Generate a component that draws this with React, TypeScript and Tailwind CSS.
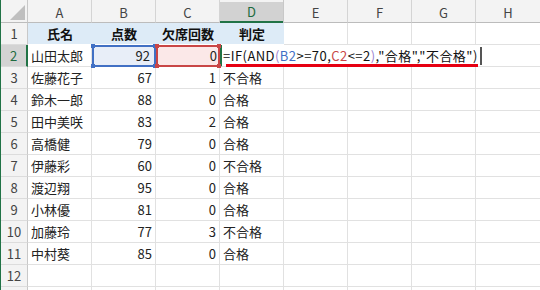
import React from 'react';

type Row = [string, number, number, string];

const COLS = ['A', 'B', 'C', 'D', 'E', 'F', 'G', 'H'];

const rows: Row[] = [
  ['佐藤花子', 67, 1, '不合格'],
  ['鈴木一郎', 88, 0, '合格'],
  ['田中美咲', 83, 2, '合格'],
  ['高橋健', 79, 0, '合格'],
  ['伊藤彩', 60, 0, '不合格'],
  ['渡辺翔', 95, 0, '合格'],
  ['小林優', 81, 0, '合格'],
  ['加藤玲', 77, 3, '不合格'],
  ['中村葵', 85, 0, '合格'],
];

const grid = 'border-r border-b border-[#e1e1e1]';
const rowHead =
  'flex items-center justify-center bg-[#f3f3f3] border-r border-b border-r-[#c8c8c8] border-b-[#dcdcdc] text-[13px] text-[#444]';

const Handles: React.FC<{ color: string }> = ({ color }) => (
  <>
    <span className={`absolute -left-[3px] -top-[3px] h-[4px] w-[4px] ${color}`} />
    <span className={`absolute -right-[3px] -top-[3px] h-[4px] w-[4px] ${color}`} />
    <span className={`absolute -left-[3px] -bottom-[3px] h-[4px] w-[4px] ${color}`} />
    <span className={`absolute -right-[3px] -bottom-[3px] h-[4px] w-[4px] ${color}`} />
  </>
);

const EmptyCells: React.FC<{ count: number }> = ({ count }) => (
  <>
    {Array.from({ length: count }).map((_, i) => (
      <div key={i} className={grid} />
    ))}
  </>
);

export default function App() {
  return (
    <div className="h-[290px] w-[540px] overflow-hidden bg-white font-['Noto_Sans_CJK_JP',sans-serif] text-[13px] text-[#222]">
      <div className="grid grid-cols-[27px_repeat(7,64px)_65px] grid-rows-[23px_repeat(13,22px)] border-l border-l-[#217346]">
        {/* column headers */}
        <div className="relative border-r border-b border-r-[#c8c8c8] border-b-[#bcbcbc] bg-[#f3f3f3]">
          <svg className="absolute bottom-[2px] right-[2px]" width="15" height="15" viewBox="0 0 15 15">
            <polygon points="15,0 15,15 0,15" fill="#bfbfbf" />
          </svg>
        </div>
        {COLS.map((c) =>
          c === 'D' ? (
            <div key={c} className="flex flex-col border-r border-r-[#c8c8c8] bg-[#f3f3f3]">
              <div className="h-[4px]" />
              <div className="flex flex-1 items-center justify-center border-b-2 border-b-[#217346] bg-[#d2d2d2] text-[#1d6b40]">
                {c}
              </div>
            </div>
          ) : (
            <div
              key={c}
              className="flex items-center justify-center border-r border-b border-r-[#d4d4d4] border-b-[#bcbcbc] bg-[#f3f3f3] pt-[3px] text-[#444]"
            >
              {c}
            </div>
          )
        )}

        {/* row 1 */}
        <div className={rowHead}>1</div>
        {['氏名', '点数', '欠席回数', '判定'].map((h) => (
          <div
            key={h}
            className="flex items-center justify-center border-b border-b-[#ffffff] bg-[#ddebf7] font-bold text-[#111]"
          >
            {h}
          </div>
        ))}
        <EmptyCells count={4} />

        {/* row 2 */}
        <div className="flex items-center justify-center border-b border-b-[#dcdcdc] border-r-2 border-r-[#217346] bg-[#d3d3d3] text-[#1d6b40]">
          2
        </div>
        <div className={`flex items-center pl-[3px] ${grid}`}>山田太郎</div>
        <div className="relative z-10 flex items-center justify-end border-2 border-[#4170c4] bg-[#e8eef8] pr-[4px]">
          92
          <Handles color="bg-[#4170c4]" />
        </div>
        <div className="relative z-10 flex items-center justify-end border-2 border-[#c94646] bg-[#fbe8e8] pr-[1px]">
          0
          <Handles color="bg-[#c94646]" />
        </div>
        <div className="relative col-span-5 flex items-center border-b border-b-[#e1e1e1] border-l-2 border-l-[#217346] bg-white pl-[1px] tracking-[0.45px] text-[#111]">
          <span>=IF(AND</span>
          <span className="text-[#9a7fd0]">(</span>
          <span className="text-[#3f6fc6]">B2</span>
          <span>&gt;=70,</span>
          <span className="text-[#c94646]">C2</span>
          <span>&lt;=2</span>
          <span className="text-[#9a7fd0]">)</span>
          <span>,"合格","不合格")</span>
          <span className="ml-[2px] inline-block h-[18px] w-[2px] bg-[#555]" />
          <span className="absolute left-[4px] top-[19px] h-[3px] w-[252px] bg-[#e60012]" />
        </div>

        {/* rows 3-11 */}
        {rows.map(([name, score, absent, result], i) => (
          <React.Fragment key={name}>
            <div className={rowHead}>{i + 3}</div>
            <div className={`flex items-center pl-[3px] ${grid}`}>{name}</div>
            <div className={`flex items-center justify-end pr-[3px] ${grid}`}>{score}</div>
            <div className={`flex items-center justify-end pr-[3px] ${grid}`}>{absent}</div>
            <div className={`flex items-center pl-[3px] ${grid}`}>{result}</div>
            <EmptyCells count={4} />
          </React.Fragment>
        ))}

        {/* row 12, and the top edge of row 13 */}
        <div className={rowHead}>12</div>
        <EmptyCells count={8} />
        <div className={rowHead} />
        <EmptyCells count={8} />
      </div>
    </div>
  );
}
